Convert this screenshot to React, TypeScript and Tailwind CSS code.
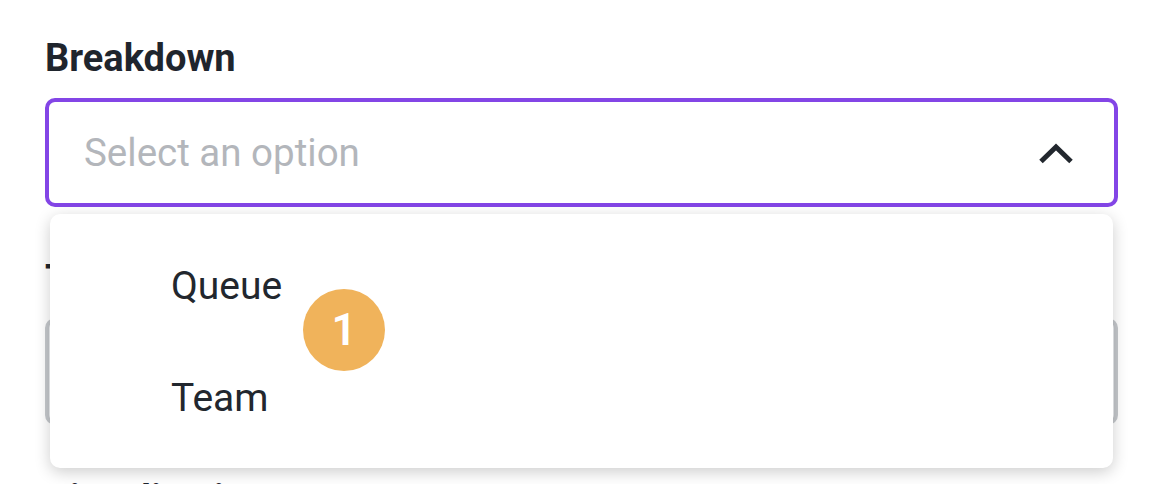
import { useState } from "react";

const font = { fontFamily: "Roboto, 'Liberation Sans', sans-serif" };

function ChevronUp() {
  return (
    <svg width="34" height="22" viewBox="0 0 34 22" fill="none" className="shrink-0">
      <polyline points="2,19.5 17,5 32,19.5" stroke="#22272e" strokeWidth="5" />
    </svg>
  );
}

function Label({ children }: { children: string }) {
  return <p className="text-[38px] font-bold leading-[44px] text-[#1f252d]">{children}</p>;
}

export default function App() {
  const [options] = useState(["Queue", "Team"]);

  return (
    <div className="h-[484px] w-[1168px] overflow-hidden bg-white pl-[45px] pt-[36px]" style={font}>
      <div className="flex w-[1073px] flex-col">
        <Label>Breakdown</Label>
        <div className="relative mt-[18px]">
          <div className="flex h-[109px] items-center justify-between rounded-[10px] border-4 border-[#8345e6] pl-[35px] pr-[41px]">
            <span className="text-[38.5px] leading-[46px] text-[#b3b6bb]">Select an option</span>
            <ChevronUp />
          </div>

          <div className="absolute left-[5px] right-[5px] top-[116px] z-10 flex flex-col rounded-[10px] bg-white pb-[14px] pt-4 shadow-[0_4px_16px_rgba(0,0,0,0.2)]">
            {options.map((o) => (
              <div key={o} className="flex h-[112px] items-center pl-[121px]">
                <span className="text-[39px] leading-[46px] text-[#22272e]">{o}</span>
              </div>
            ))}
            <span className="absolute left-[253px] top-[75px] flex h-[82px] w-[82px] items-center justify-center rounded-full bg-[#f0b35b] text-[44px] font-semibold leading-none text-white">
              1
            </span>
          </div>
        </div>

        <div className="mt-[50px]">
          <Label>Time range</Label>
          <div className="mt-[17px] h-[107px] rounded-[10px] border-4 border-[#c5c8cc] bg-[#eef0f2]" />
        </div>

        <div className="mt-[52px]">
          <Label>Visualization</Label>
        </div>
      </div>
    </div>
  );
}
